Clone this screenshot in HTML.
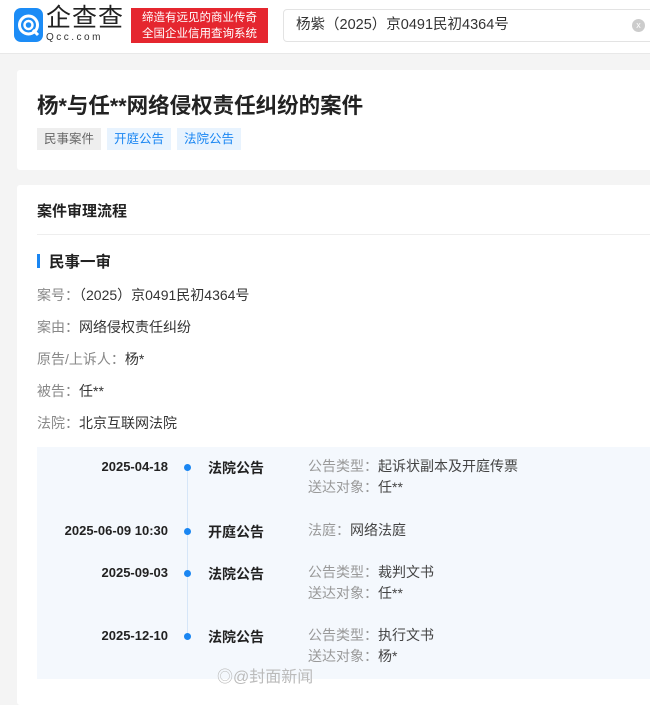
<!DOCTYPE html>
<html><head><meta charset="utf-8"><style>
*{margin:0;padding:0;box-sizing:border-box}
body{width:650px;height:689px;overflow:hidden;background:#f4f4f4;font-family:"Liberation Sans","Noto Sans CJK SC",sans-serif;color:#333;position:relative}
.abs{position:absolute}
.hdr{left:0;top:0;width:650px;height:54px;background:#fff;border-bottom:1px solid #e8e8e8}
.logo{left:14px;top:8px;width:29px;height:34px;background:#1c8cf6;border-radius:7px}
.card{background:#fff;border-radius:3px}
.tag{top:128px;height:22px;font-size:12.5px;line-height:22px;padding:0 7px}
.lab{color:#888}
.row{font-size:14px;left:37px}
.tl{font-size:14px}
.d{width:140px;text-align:right;left:28px;font-weight:bold;color:#222;font-size:13px}
.dot{left:184px;width:7px;height:7px;border-radius:50%;background:#1a86f2}
.k{left:208px;font-weight:bold;color:#222}
.v{left:308px;color:#444;line-height:21px}
.v span{color:#999}
</style></head><body>
<div class="abs hdr"></div>
<div class="abs logo"><svg width="29" height="34" viewBox="0 0 29 34"><circle cx="14.5" cy="17" r="9" fill="none" stroke="#fff" stroke-width="3"/><circle cx="14.5" cy="17" r="4" fill="none" stroke="#fff" stroke-width="2.5"/><path d="M19 22l5 5" stroke="#fff" stroke-width="3"/></svg></div>
<div class="abs" style="left:46px;top:5px;font-size:25px;line-height:27px;color:#222;letter-spacing:1px">企查查</div>
<div class="abs" style="left:46px;top:32px;font-size:10px;color:#333;letter-spacing:2.5px">Qcc.com</div>
<div class="abs" style="left:131px;top:8px;width:137px;height:35px;background:#e5262f;color:#fff;font-size:11.5px;line-height:16px;padding:2px 3px;text-align:center">缔造有远见的商业传奇<br>全国企业信用查询系统</div>
<div class="abs" style="left:283px;top:9px;width:380px;height:33px;border:1px solid #e3e3e3;border-radius:4px;background:#fff;font-size:14.5px;line-height:31px;padding-left:12px;color:#333">杨紫（2025）京0491民初4364号</div>
<div class="abs" style="left:632px;top:19px;width:13px;height:13px;border-radius:50%;background:#ccc;color:#fff;font-size:9px;line-height:13px;text-align:center">x</div>

<div class="abs card" style="left:17px;top:70px;width:640px;height:100px"></div>
<div class="abs" style="left:37px;top:89px;font-size:21.5px;font-weight:bold;color:#222">杨*与任**网络侵权责任纠纷的案件</div>
<div class="abs tag" style="left:37px;background:#eee;color:#666">民事案件</div>
<div class="abs tag" style="left:107px;background:#e8f3fe;color:#1a86f2">开庭公告</div>
<div class="abs tag" style="left:177px;background:#e8f3fe;color:#1a86f2">法院公告</div>

<div class="abs card" style="left:17px;top:185px;width:640px;height:520px"></div>
<div class="abs" style="left:37px;top:200px;font-size:15px;font-weight:bold;color:#222">案件审理流程</div>
<div class="abs" style="left:37px;top:234px;width:620px;height:1px;background:#eee"></div>
<div class="abs" style="left:37px;top:254px;width:3px;height:14px;background:#1a86f2"></div>
<div class="abs" style="left:49px;top:250px;font-size:15.5px;font-weight:bold;color:#222">民事一审</div>
<div class="abs row" style="top:285px"><span class="lab">案号：</span>（2025）京0491民初4364号</div>
<div class="abs row" style="top:317px"><span class="lab">案由：</span>网络侵权责任纠纷</div>
<div class="abs row" style="top:349px"><span class="lab">原告/上诉人：</span>杨*</div>
<div class="abs row" style="top:381px"><span class="lab">被告：</span>任**</div>
<div class="abs row" style="top:413px"><span class="lab">法院：</span>北京互联网法院</div>

<div class="abs" style="left:37px;top:447px;width:620px;height:232px;background:#f4f8fd"></div>
<div class="abs" style="left:187px;top:470px;width:1px;height:170px;background:#d6e6f8"></div>

<div class="abs tl d" style="top:459px">2025-04-18</div>
<div class="abs dot" style="top:464px"></div>
<div class="abs tl k" style="top:458px">法院公告</div>
<div class="abs tl v" style="top:456px"><span>公告类型：</span>起诉状副本及开庭传票<br><span>送达对象：</span>任**</div>

<div class="abs tl d" style="top:523px">2025-06-09 10:30</div>
<div class="abs dot" style="top:528px"></div>
<div class="abs tl k" style="top:522px">开庭公告</div>
<div class="abs tl v" style="top:520px"><span>法庭：</span>网络法庭</div>

<div class="abs tl d" style="top:565px">2025-09-03</div>
<div class="abs dot" style="top:570px"></div>
<div class="abs tl k" style="top:564px">法院公告</div>
<div class="abs tl v" style="top:562px"><span>公告类型：</span>裁判文书<br><span>送达对象：</span>任**</div>

<div class="abs tl d" style="top:628px">2025-12-10</div>
<div class="abs dot" style="top:633px"></div>
<div class="abs tl k" style="top:627px">法院公告</div>
<div class="abs tl v" style="top:625px"><span>公告类型：</span>执行文书<br><span>送达对象：</span>杨*</div>

<div class="abs" style="left:217px;top:663px;font-size:16px;color:#bbb">◎@封面新闻</div>
</body></html>
